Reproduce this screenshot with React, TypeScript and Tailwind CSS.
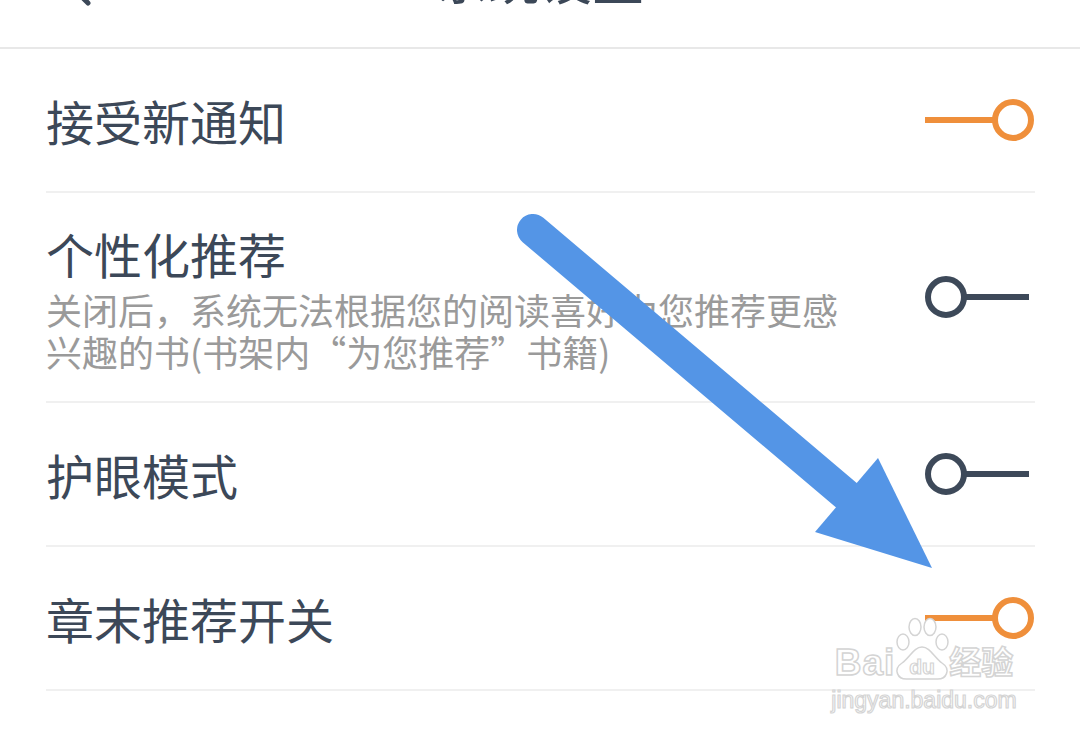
const ink = "#3c4858";

function Toggle({ on }: { on: boolean }) {
  const color = on ? "#ef8f3b" : "#3d4959";
  return (
    <svg width="110" height="44" viewBox="0 0 110 44" className="shrink-0">
      {on ? (
        <>
          <line x1="0" y1="22" x2="68" y2="22" stroke={color} strokeWidth="6" />
          <circle cx="88" cy="22" r="18" fill="white" stroke={color} strokeWidth="6" />
        </>
      ) : (
        <>
          <line x1="38" y1="22" x2="104" y2="22" stroke={color} strokeWidth="6" />
          <circle cx="21" cy="22" r="18" fill="white" stroke={color} strokeWidth="6" />
        </>
      )}
    </svg>
  );
}

function Row({ title, desc, on, tall }: { title: string; desc?: string; on: boolean; tall?: boolean }) {
  return (
    <div
      className={`flex items-center justify-between border-b-2 border-[#f0f0f0] ${tall ? "h-[210px]" : "h-[144px]"}`}
    >
      <div className="flex flex-col">
        <div className={`text-[48px] ${desc ? "leading-[60px]" : "leading-[56px]"}`} style={{ color: ink }}>
          {title}
        </div>
        {desc && (
          <div className="mt-[5px] max-w-[800px] text-[36px] leading-[42px] text-[#9a9a9a]">{desc}</div>
        )}
      </div>
      <Toggle on={on} />
    </div>
  );
}

function Watermark() {
  const stroke = "[-webkit-text-stroke:1.5px_#d4d4d4]";
  return (
    <div
      className="pointer-events-none absolute left-[826px] top-[616px] flex w-[196px] flex-col items-center"
      style={{ fontFamily: '"Liberation Sans", "Noto Sans CJK SC", sans-serif' }}
    >
      <div className="flex items-end">
        <span className={`text-[37px] font-bold leading-[38px] tracking-[1px] text-white ${stroke}`}>Bai</span>
        <svg width="60" height="66" viewBox="0 0 60 66" className="-mx-[3px]">
          <g fill="white" stroke="#d4d4d4" strokeWidth="1.5">
            <ellipse cx="11" cy="26" rx="6" ry="8" />
            <ellipse cx="23" cy="11" rx="6" ry="8.5" />
            <ellipse cx="38" cy="11" rx="6" ry="8.5" />
            <ellipse cx="50" cy="26" rx="6" ry="8" />
            <path d="M30 31 C22 31 18 41 10 47 C1 53 5 64 16 63 L44 63 C55 64 59 53 50 47 C42 41 38 31 30 31 Z" />
          </g>
          <text
            x="30"
            y="58"
            textAnchor="middle"
            fontSize="21"
            fontWeight="bold"
            fill="white"
            stroke="#d4d4d4"
            strokeWidth="1.2"
            fontFamily="Liberation Sans, sans-serif"
          >
            du
          </text>
        </svg>
        <span className={`text-[32px] font-bold leading-[38px] text-white ${stroke}`}>经验</span>
      </div>
      <span className="mt-[4px] text-[23px] leading-[28px] text-white [-webkit-text-stroke:1.2px_#d4d4d4]">
        jingyan.baidu.com
      </span>
    </div>
  );
}

export default function App() {
  return (
    <div
      className="relative h-[736px] w-[1080px] overflow-hidden bg-white"
      style={{ fontFamily: '"Noto Sans CJK SC", "Noto Sans", sans-serif' }}
    >
      <header className="h-[49px] overflow-hidden border-b-2 border-[#e8e8e8]">
        <div className="-mt-[66px] flex h-[88px] items-center">
          <svg width="30" height="44" viewBox="0 0 30 44" className="ml-[64px] mt-[14px] shrink-0">
            <path d="M24 4 L6 22 L24 40" fill="none" stroke={ink} strokeWidth="5" strokeLinecap="round" strokeLinejoin="round" />
          </svg>
          <span className="flex-1 pr-[94px] text-center text-[52px] leading-none" style={{ color: ink }}>
            系统设置
          </span>
        </div>
      </header>

      <div className="ml-[46px] mr-[45px]">
        <Row title="接受新通知" on />
        <Row
          title="个性化推荐"
          desc="关闭后，系统无法根据您的阅读喜好为您推荐更感兴趣的书(书架内“为您推荐”书籍)"
          on={false}
          tall
        />
        <Row title="护眼模式" on={false} />
        <Row title="章末推荐开关" on />
      </div>

      <svg className="pointer-events-none absolute left-0 top-0" width="1080" height="736" viewBox="0 0 1080 736">
        <line x1="533" y1="230" x2="852" y2="500" stroke="#5495e6" strokeWidth="32" strokeLinecap="round" />
        <polygon points="815,532 878,458 932,568" fill="#5495e6" />
      </svg>

      <Watermark />
    </div>
  );
}
